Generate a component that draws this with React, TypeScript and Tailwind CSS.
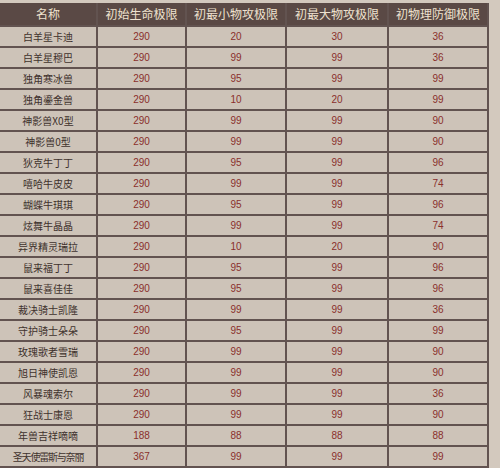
import React from "react";

// 名称, 初始生命极限, 初最小物攻极限, 初最大物攻极限, 初物理防御极限
const headers = ["名称", "初始生命极限", "初最小物攻极限", "初最大物攻极限", "初物理防御极限"];

const rows: [string, number, number, number, number][] = [
  ["白羊星卡迪", 290, 20, 30, 36],
  ["白羊星穆巴", 290, 99, 99, 36],
  ["独角寒冰兽", 290, 95, 99, 99],
  ["独角鎏金兽", 290, 10, 20, 99],
  ["神影兽X0型", 290, 99, 99, 90],
  ["神影兽0型", 290, 99, 99, 90],
  ["狄克牛丁丁", 290, 95, 99, 96],
  ["嘻哈牛皮皮", 290, 99, 99, 74],
  ["蝴蝶牛琪琪", 290, 95, 99, 96],
  ["炫舞牛晶晶", 290, 99, 99, 74],
  ["异界精灵瑞拉", 290, 10, 20, 90],
  ["鼠来福丁丁", 290, 95, 99, 96],
  ["鼠来喜佳佳", 290, 95, 99, 96],
  ["裁决骑士凯隆", 290, 99, 99, 36],
  ["守护骑士朵朵", 290, 95, 99, 99],
  ["玫瑰歌者雪瑞", 290, 99, 99, 90],
  ["旭日神使凯恩", 290, 99, 99, 90],
  ["风暴魂索尔", 290, 99, 99, 36],
  ["狂战士康恩", 290, 99, 99, 90],
  ["年兽吉祥嘀嘀", 188, 88, 88, 88],
  ["圣天使雷斯与奈丽", 367, 99, 99, 99],
];

const cjk = "font-['Noto_Sans_CJK_SC','Noto_Sans',sans-serif]";

export default function App() {
  return (
    <div className="w-[500px] h-[468px] bg-[#d3c9be] pt-[3px] overflow-hidden">
      <div className="w-[489px] bg-[#625350] pr-[2px] pb-[2px]">
        <div className="grid grid-cols-[96px_87px_98px_100px_98px] gap-[2px]">
          {headers.map((h) => (
            <div
              key={h}
              className={`h-[22px] bg-[#5a4945] flex items-center justify-center text-[12px] leading-none text-[#efe2cf] ${cjk}`}
            >
              {h}
            </div>
          ))}
          {rows.map((r) => (
            <React.Fragment key={r[0]}>
              <div
                className={`h-[19px] bg-[#cdc3b8] flex items-center justify-center text-[10px] leading-none text-[#3f322d] ${cjk} ${
                  r[0].length > 7 ? "tracking-[-1.2px]" : ""
                }`}
              >
                {r[0]}
              </div>
              {r.slice(1).map((v, i) => (
                <div
                  key={i}
                  className="h-[19px] bg-[#cdc3b8] flex items-center justify-center text-[10px] leading-none text-[#8a2f2c] font-['Liberation_Sans',sans-serif]"
                >
                  {v}
                </div>
              ))}
            </React.Fragment>
          ))}
        </div>
      </div>
    </div>
  );
}
